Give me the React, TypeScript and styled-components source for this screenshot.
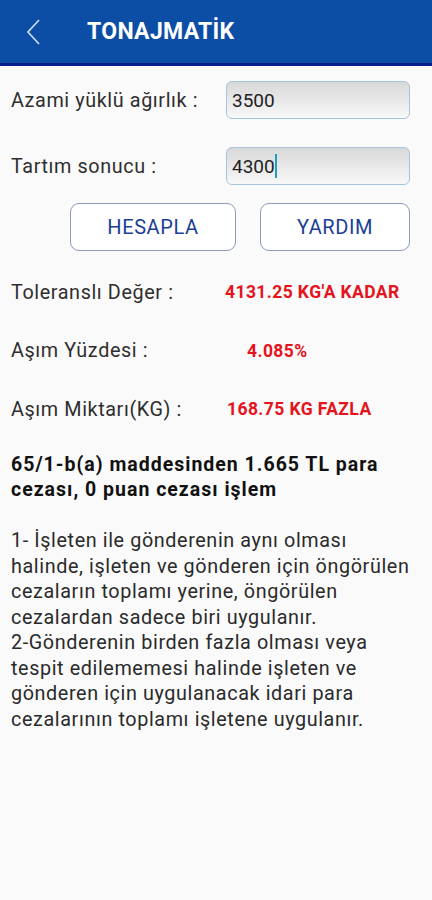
import React from 'react'
import styled, { createGlobalStyle } from 'styled-components'

const GlobalStyle = createGlobalStyle`
  html, body {
    margin: 0;
    padding: 0;
    background: #fafafa;
  }
  body {
    font-family: Roboto, "Liberation Sans", Arial, sans-serif;
  }
`

const Page = styled.div`
  width: 432px;
  min-height: 900px;
  background: #fafafa;
`
const Header = styled.header`
  height: 66px;
  background: #0c4da5;
  border-bottom: 3px solid #0b1f8c;
  display: flex;
  align-items: center;
  box-sizing: border-box;
`
const BackButton = styled.button`
  width: 72px;
  height: 60px;
  border: none;
  background: transparent;
  padding: 0 0 0 25px;
  display: flex;
  align-items: center;
`
const Title = styled.h1`
  margin: 0 0 0 15px;
  color: #fff;
  font-size: 23px;
  font-weight: 700;
  letter-spacing: 0.3px;
`
const Content = styled.main`
  padding: 15px 10px 0 11px;
`
const FieldRow = styled.div`
  display: flex;
  align-items: center;
  height: 38px;
  margin-bottom: 28px;
  &:nth-child(2) {
    margin-bottom: 18px;
  }
`
const Label = styled.label`
  width: 215px;
  font-size: 19.8px;
  letter-spacing: 0.6px;
  color: #2e2e2e;
`
const inputBox = `
  width: 184px;
  height: 38px;
  box-sizing: border-box;
  border: 1px solid #a8c3df;
  border-radius: 6px;
  background: linear-gradient(#d8d8d8, #f8f8f8);
  font-size: 19px;
  color: #222;
  padding: 0 5px;
`
const Input = styled.input`
  ${inputBox}
  font-family: Roboto, "Liberation Sans", Arial, sans-serif;
  outline: none;
`
const FakeInput = styled.div`
  ${inputBox}
  display: flex;
  align-items: center;
`
const Caret = styled.span`
  display: inline-block;
  width: 2px;
  height: 24px;
  background: #1aa3c0;
`
const ButtonRow = styled.div`
  display: flex;
  gap: 24px;
  margin-left: 59px;
`
const ActionButton = styled.button<{ $width: number }>`
  width: ${p => p.$width}px;
  height: 48px;
  border: 1.5px solid #8c9cba;
  border-radius: 9px;
  background: #fff;
  color: #1b3e96;
  font-family: Roboto, "Liberation Sans", Arial, sans-serif;
  font-size: 20px;
  font-weight: 400;
  letter-spacing: 0.6px;
`
const ResultList = styled.div`
  margin-top: 29px;
  display: flex;
  flex-direction: column;
  gap: 34.5px;
`
const ResultRow = styled.div`
  display: flex;
  align-items: center;
  height: 24px;
`
const ResultLabel = styled.span`
  width: 214px;
  font-size: 19.8px;
  letter-spacing: 0.6px;
  color: #2e2e2e;
  white-space: nowrap;
`
const ResultValue = styled.span<{ $shift: number }>`
  padding-left: ${p => p.$shift}px;
  color: #e5141c;
  font-size: 17.5px;
  letter-spacing: 0.4px;
  font-weight: 700;
`
const Penalty = styled.p`
  margin: 31px 0 0;
  font-size: 19.5px;
  font-weight: 700;
  letter-spacing: 1px;
  line-height: 25px;
  color: #111;
`
const Note = styled.p`
  margin: 26px 0 0;
  font-size: 19.8px;
  letter-spacing: 0.6px;
  line-height: 25.5px;
  color: #2a2a2a;
  white-space: pre-line;
`

const results = [
  { label: 'Toleranslı Değer :', value: "4131.25 KG'A KADAR", shift: 0 },
  { label: 'Aşım Yüzdesi :', value: '4.085%', shift: 22 },
  { label: 'Aşım Miktarı(KG) :', value: '168.75 KG FAZLA', shift: 2 }
]

export default function App () {
  return (
    <Page>
      <GlobalStyle />
      <Header>
        <BackButton aria-label='geri'>
          <svg width='16' height='26' viewBox='0 0 16 26'>
            <path d='M14 1 L3 13 L14 25' fill='none' stroke='#c9d7f0' strokeWidth='1.8' />
          </svg>
        </BackButton>
        <Title>TONAJMATİK</Title>
      </Header>
      <Content>
        <FieldRow>
          <Label>Azami yüklü ağırlık :</Label>
          <Input type='text' defaultValue='3500' />
        </FieldRow>
        <FieldRow>
          <Label>Tartım sonucu :</Label>
          <FakeInput>4300<Caret /></FakeInput>
        </FieldRow>
        <ButtonRow>
          <ActionButton $width={166}>HESAPLA</ActionButton>
          <ActionButton $width={150}>YARDIM</ActionButton>
        </ButtonRow>
        <ResultList>
          {results.map(r => (
            <ResultRow key={r.label}>
              <ResultLabel>{r.label}</ResultLabel>
              <ResultValue $shift={r.shift}>{r.value}</ResultValue>
            </ResultRow>
          ))}
        </ResultList>
        <Penalty>65/1-b(a) maddesinden 1.665 TL para cezası, 0 puan cezası işlem</Penalty>
        <Note>
          {'1- İşleten ile gönderenin aynı olması halinde, işleten ve gönderen için öngörülen cezaların toplamı yerine, öngörülen cezalardan sadece biri uygulanır.\n2-Gönderenin birden fazla olması veya tespit edilememesi halinde işleten ve gönderen için uygulanacak idari para cezalarının toplamı işletene uygulanır.'}
        </Note>
      </Content>
    </Page>
  )
}
